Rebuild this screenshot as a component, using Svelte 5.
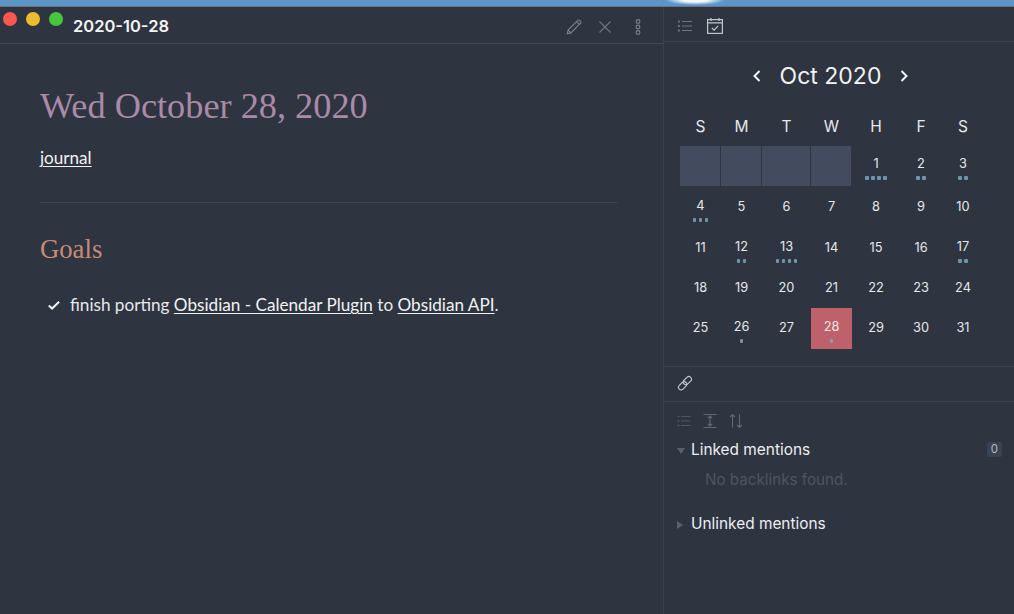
<script lang="ts">
  const weekdays = ["S", "M", "T", "W", "H", "F", "S"];
  const dots: Record<number, number> = { 1: 4, 2: 2, 3: 2, 4: 3, 12: 2, 13: 4, 17: 2, 26: 1, 28: 1 };
  const days = Array.from({ length: 31 }, (_, i) => i + 1);
  const blanks = [0, 1, 2, 3];
</script>

<div class="window">
  <div class="strip"></div>
  <div class="panes">
    <main class="editor">
      <header class="titlebar">
        <div class="lights">
          <span class="light red"></span>
          <span class="light yellow"></span>
          <span class="light green"></span>
        </div>
        <span class="note-title">2020-10-28</span>
        <div class="actions">
          <svg width="18" height="18" viewBox="0 0 18 18" fill="none" stroke="#7d828d" stroke-width="1.1">
            <path d="M2.2 15.8l.9-3.7L12.8 2.4a1.3 1.3 0 0 1 1.9 0l.9.9a1.3 1.3 0 0 1 0 1.9L5.900 14.900z" />
            <path d="M3.100 12.100l2.800 2.800M11.600 3.600l2.800 2.800" />
          </svg>
          <svg width="14" height="14" viewBox="0 0 14 14" fill="none" stroke="#6f7480" stroke-width="1.1">
            <path d="M1.500 1.500l11 11M12.500 1.500l-11 11" />
          </svg>
          <svg width="8" height="18" viewBox="0 0 8 18" fill="none" stroke="#7d828d" stroke-width="1.100">
            <circle cx="4" cy="3.500" r="1.900" />
            <circle cx="4" cy="9" r="1.900" />
            <circle cx="4" cy="14.500" r="1.900" />
          </svg>
        </div>
      </header>
      <article class="note">
        <h1>Wed October 28, 2020</h1>
        <p class="tag"><a href="#journal">journal</a></p>
        <hr />
        <h2>Goals</h2>
        <div class="task">
          <svg width="14" height="14" viewBox="0 0 14 14" fill="none" stroke="#f2f3f5" stroke-width="2">
            <path d="M1.800 7.400l3.300 3.100 7-6.800" />
          </svg>
          <span>finish porting <a href="#calendar">Obsidian - Calendar Plugin</a> to <a href="#api">Obsidian API</a>.</span>
        </div>
      </article>
    </main>

    <aside class="sidebar">
      <div class="side-tabs">
        <svg width="16" height="14" viewBox="0 0 16 14" fill="none" stroke="#70757f" stroke-width="1">
          <path d="M5 2.500h10M5 7h10M5 11.500h10" />
          <path d="M1 2.500h1.800M1 7h1.800M1 11.500h1.800" stroke-width="2" />
        </svg>
        <svg width="18" height="18" viewBox="0 0 18 18" fill="none" stroke="#c3c6cc" stroke-width="1.200">
          <rect x="1.600" y="2.600" width="14.800" height="13.800" />
          <path d="M1.600 5.800h14.800M5 1v3M13 1v3" />
          <path d="M5.800 10.800l2.300 2.300 4.100-4.300" />
        </svg>
      </div>

      <section class="calendar">
        <div class="month">
          <svg width="12" height="14" viewBox="0 0 12 14" fill="none" stroke="#f2f3f5" stroke-width="2">
            <path d="M8.500 2l-5 5 5 5" />
          </svg>
          <span>Oct 2020</span>
          <svg width="12" height="14" viewBox="0 0 12 14" fill="none" stroke="#f2f3f5" stroke-width="2">
            <path d="M3.500 2l5 5-5 5" />
          </svg>
        </div>
        <div class="grid">
          {#each weekdays as w}
            <div class="weekday">{w}</div>
          {/each}
          {#each blanks as b (b)}
            <div class="blank"></div>
          {/each}
          {#each days as d (d)}
            <div class="day" class:today={d === 28} class:plain={!dots[d]}>
              <span class="num">{d}</span>
              {#if dots[d]}
                <span class="dots">
                  {#each Array(dots[d]) as _}
                    <i></i>
                  {/each}
                </span>
              {/if}
            </div>
          {/each}
        </div>
      </section>

      <div class="link-row">
        <svg width="16" height="16" viewBox="0 0 17 17" fill="none" stroke="#c3c6cc" stroke-width="1.200">
          <rect x="1" y="8.700" width="10" height="5.600" rx="2.800" transform="rotate(-45 6 11.500)" />
          <rect x="6" y="3.200" width="10" height="5.600" rx="2.800" transform="rotate(-45 11 6)" />
        </svg>
      </div>

      <section class="backlinks">
        <div class="tools">
          <svg width="14" height="12" viewBox="0 0 14 12" fill="none" stroke="#50555f" stroke-width="1">
            <path d="M4 1.500h9.500M4 6h9.500M4 10.500h9.500" />
            <path d="M.5 1.500h2M.5 6h2M.5 10.500h2" stroke-width="1.500" />
          </svg>
          <svg width="16" height="16" viewBox="0 0 16 16" fill="none" stroke="#636873" stroke-width="1.200">
            <path d="M1.500 1.500h13M1.500 14.500h13M8 3v10M5.800 5.200L8 3l2.200 2.200M5.800 10.800L8 13l2.200-2.200" />
          </svg>
          <svg width="14" height="16" viewBox="0 0 14 16" fill="none" stroke="#636873" stroke-width="1.100">
            <path d="M3.500 14.500V1.500M1 4l2.500-2.500L6 4M10.500 1.500v13M8 12l2.500 2.500L13 12" />
          </svg>
        </div>
        <div class="mention-head">
          <span class="caret down"></span>
          <span class="mention-title">Linked mentions</span>
          <span class="count">0</span>
        </div>
        <p class="empty">No backlinks found.</p>
        <div class="mention-head unlinked">
          <span class="caret right"></span>
          <span class="mention-title">Unlinked mentions</span>
        </div>
      </section>
    </aside>
  </div>
</div>

<style>
  :global(body) {
    background: #2e3440;
  }

  .window {
    width: 1014px;
    height: 614px;
    overflow: hidden;
    display: flex;
    flex-direction: column;
    background: #2e3440;
    color: #eceef1;
  }

  .strip {
    height: 6px;
    flex: none;
    background: radial-gradient(ellipse 30px 5px at 695px 0, #f4f8fb 40%, transparent 100%), #5b96c6;
    border-bottom: 1px solid #697382;
  }

  .panes {
    flex: 1;
    display: flex;
    min-height: 0;
  }

  .editor {
    width: 663px;
    flex: none;
    border-right: 1px solid #3b414d;
  }

  .titlebar {
    height: 37px;
    box-sizing: border-box;
    display: flex;
    align-items: center;
    border-bottom: 1px solid #434956;
    padding-left: 3px;
  }

  .lights {
    display: flex;
    gap: 9px;
    align-self: flex-start;
    margin-top: 5px;
  }

  .light {
    width: 14px;
    height: 14px;
    border-radius: 50%;
  }

  .red { background: #fa5750; }
  .yellow { background: #ebbc2e; }
  .green { background: #47c63a; }

  .note-title {
    margin-left: 10px;
    margin-top: 1px;
    font: 600 16.500px "Inter", sans-serif;
    color: #f2f3f5;
  }

  .actions {
    margin-left: auto;
    margin-right: 21px;
    margin-top: 3px;
    display: flex;
    align-items: center;
    gap: 15px;
  }

  .actions svg:last-child {
    margin-left: 7px;
  }

  .note {
    padding: 40px 46px 0 40px;
  }

  h1 {
    margin: 0;
    font: 400 36.300px/44px "Liberation Serif", serif;
    color: #a98aa8;
  }

  .tag {
    margin: 19px 0 0;
    font: 400 17.100px/22px "Lato", sans-serif;
  }

  a {
    color: #f2f3f5;
    text-decoration: underline;
    text-underline-offset: 2px;
    text-decoration-thickness: 1px;
  }

  hr {
    margin: 33px 0 0;
    border: none;
    border-top: 1px solid #3f4551;
  }

  h2 {
    margin: 30px 0 0;
    font: 400 26.700px/32px "Liberation Serif", serif;
    color: #c98a76;
  }

  .task {
    margin: 29px 0 0 7px;
    display: flex;
    align-items: center;
    gap: 9px;
    font: 400 17.150px/22px "Lato", sans-serif;
    color: #e6e8eb;
  }

  .sidebar {
    flex: 1;
    min-width: 0;
    display: flex;
    flex-direction: column;
    font-family: "Inter", sans-serif;
  }

  .side-tabs {
    height: 35px;
    box-sizing: border-box;
    display: flex;
    align-items: center;
    gap: 13px;
    padding: 4px 0 0 13px;
    border-bottom: 1px solid #3d434f;
  }

  .calendar {
    height: 325px;
    box-sizing: border-box;
    border-bottom: 1px solid #3d434f;
    padding-left: 16px;
  }

  .month {
    display: flex;
    align-items: center;
    justify-content: center;
    width: 301px;
    gap: 17px;
    margin-top: 18px;
    height: 32px;
    font-size: 23px;
    font-weight: 400;
    color: #f2f3f5;
  }

  .grid {
    margin-top: 23px;
    display: grid;
    grid-template-columns: 41px 41px 49px 41px 48px 42px 42px;
    grid-template-rows: 31px 42px 41px 40px 40px 40px;
  }

  .weekday {
    text-align: center;
    font-size: 15.500px;
    line-height: 24px;
    color: #e6e8eb;
  }

  .blank {
    background: #434c5e;
    margin-right: 1px;
    height: 40px;
  }

  .day {
    display: flex;
    flex-direction: column;
    align-items: center;
    padding-top: 10px;
    box-sizing: border-box;
    font-size: 12.800px;
    line-height: 16px;
    color: #e6e8eb;
  }

  .day.plain {
    padding-top: 11px;
  }

  .day.today {
    background: #bf616a;
    color: #f6e6e8;
    margin-top: -1px;
    padding-top: 11px;
  }

  .dots {
    display: flex;
    gap: 2.500px;
    margin-top: 4px;
  }

  .dots i {
    width: 3.500px;
    height: 3.500px;
    border-radius: 1px;
    background: #6f95ad;
  }

  .today .dots i {
    background: #8a9cae;
  }

  .link-row {
    height: 35px;
    flex: none;
    box-sizing: border-box;
    display: flex;
    align-items: center;
    padding: 0 0 2px 13px;
    border-bottom: 1px solid #3d434f;
  }

  .backlinks {
    padding: 10px 12px 0 13px;
  }

  .tools {
    display: flex;
    align-items: center;
    gap: 11px;
    height: 18px;
  }

  .mention-head {
    display: flex;
    align-items: center;
    margin-top: 9px;
    height: 20px;
    font-size: 15.400px;
    color: #eceef1;
  }

  .caret {
    width: 0;
    height: 0;
    margin-top: 3px;
  }

  .caret.down {
    border-left: 4px solid transparent;
    border-right: 4px solid transparent;
    border-top: 6px solid #5a606c;
    margin-right: 6px;
  }

  .caret.right {
    border-top: 4px solid transparent;
    border-bottom: 4px solid transparent;
    border-left: 6px solid #5a606c;
    margin-right: 8px;
  }

  .count {
    margin-left: auto;
    width: 15px;
    height: 15px;
    border-radius: 2px;
    background: #3b4252;
    color: #b4b9c2;
    font-size: 11.500px;
    line-height: 15px;
    text-align: center;
  }

  .empty {
    margin: 11px 0 0 28px;
    font-size: 15.200px;
    line-height: 20px;
    color: #4f5562;
  }

  .unlinked {
    margin-top: 23px;
  }
</style>
